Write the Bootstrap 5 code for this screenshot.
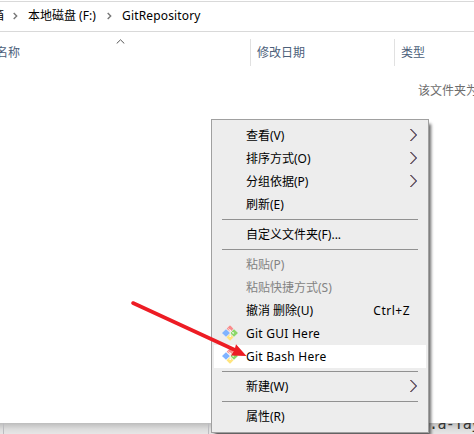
<!DOCTYPE html>
<html lang="zh-CN">
<head>
<meta charset="utf-8">
<title>GitRepository</title>
<link rel="stylesheet" href="https://cdn.jsdelivr.net/npm/bootstrap@5.3.0/dist/css/bootstrap.min.css">
<style>
html{overflow:hidden}
body{width:474px;height:434px;overflow:hidden;background:#fff;color:#000;font:12px/23px "Noto Sans","Noto Sans CJK SC",sans-serif}
.explorer{height:423px;overflow:hidden}
.address{height:32px;padding-top:1px}
.address-inner{height:31px;border-top:1px solid #d9d9d9;border-bottom:1px solid #d9d9d9;line-height:28px}
.crumb-cut{width:4px;margin-right:9px}
.crumb-cut span{margin-left:-8px}
.crumb-disk{width:79px;margin-left:10px}
.crumb-repo{margin-left:10px;letter-spacing:.16px}
.crumb-arrow{margin-top:10px}
.headers{height:34px;color:#4c607a;line-height:27px;padding-top:7px}
.headers>div{height:27px}
.h-name{width:250px}
.h-name span{margin-left:-4px}
.h-date{width:144px;border-left:1px solid #e1e1e1;padding-left:6px}
.h-type{width:80px;border-left:1px solid #e1e1e1;padding-left:6px}
.sorter{left:116px;top:39px}
.empty-note{padding:13px 0 0 418px;color:#6d6d6d}
.behind{height:11px;background:linear-gradient(#bdbdbd,#dcdcdc 55%,#e6e6e6)}
.behind i{width:1px;background:#bcbcc0}
.behind i:first-child{margin-left:3px}
.behind i:last-child{margin-left:204px}
.code-peek{left:430px;top:423px;width:44px;height:11px;font:15px/18px "DejaVu Sans Mono",monospace;color:#353535}
.code-peek span{margin:-8px 0 0 -1px;letter-spacing:-.6px;white-space:nowrap}
.ctx{left:211px;top:119px;width:218px;height:314px;padding:4px 2px;background:#ededed;border:1px solid #a0a0a0;box-shadow:3px 4px 3px -1px rgba(0,0,0,.6)}
.ctx-item{height:23px;padding-left:32px}
.ctx-item.off{color:#838383}
.ctx-item.hot{background:#fff}
.ctx-item .go{margin:4px 8px 0 auto}
.ctx-item .logo{margin:3px 8px 0 -24px}
.ctx-line{height:7px;padding:3px 8px 3px}
.ctx-line::before{content:"";display:block;height:1px;background:#919191}
.wide{letter-spacing:.25px}
.keys{letter-spacing:.5px}
.pointer{left:0;top:0}
</style>
<script src="https://cdn.jsdelivr.net/npm/bootstrap@5.3.0/dist/js/bootstrap.bundle.min.js"></script>
</head>
<body class="position-relative">
<svg width="0" height="0" class="position-absolute">
  <symbol id="go" viewBox="0 0 9 14"><path d="M1 1 6.6 7 1 13" fill="none" stroke="#dba25c" stroke-width="1"/><path d="M2.2 1 8 7 2.2 13" fill="none" stroke="#5a9be8" stroke-width="1"/><path d="M1.5 1 7.3 7 1.5 13" fill="none" stroke="#4a1830" stroke-width=".9"/></symbol>
  <symbol id="git" viewBox="0 0 16 16">
    <path d="M8 .6Q8.4.6 8.8 1L11.4 3.7 8.4 6.7 4.7 3.7 7.2 1Q7.6.6 8 .6Z" fill="#f98b8b"/>
    <path d="M4 4.3 7.5 7.6Q7.9 8 7.5 8.4L4 11.8.5 8.4Q.1 8 .5 7.6Z" fill="#80b3ff"/>
    <path d="M12 4.3 15.5 7.6Q15.9 8 15.5 8.4L12 11.8 8.6 8.4V7.6Z" fill="#8bd867"/>
    <path d="M8 8.9 11.5 12.3 8.4 15.4Q8 15.8 7.6 15.4L4.5 12.3Z" fill="#ffe47d"/>
    <path d="M6.2 3.4 8.3 5.4V11.2M8.3 5.4 10.8 7.8" fill="none" stroke="#f4f4f4" stroke-width=".8"/>
    <circle cx="8.2" cy="5.2" r=".7" fill="#fff"/><circle cx="8.2" cy="11.2" r=".8" fill="#fff"/><circle cx="11.2" cy="8" r=".8" fill="#fff"/>
  </symbol>
</svg>
<main class="explorer">
  <div class="address"><div class="address-inner d-flex">
    <div class="crumb-cut overflow-hidden"><span>箱</span></div>
    <svg class="crumb-arrow" width="5" height="8"><path d="M.7.9 3.7 4 .7 7.1" fill="none" stroke="#777" stroke-width="1.4"/></svg>
    <span class="crumb-disk">本地磁盘 (F:)</span>
    <svg class="crumb-arrow" width="5" height="8"><path d="M.7.9 3.7 4 .7 7.1" fill="none" stroke="#777" stroke-width="1.4"/></svg>
    <span class="crumb-repo">GitRepository</span>
  </div></div>
  <div class="headers d-flex">
    <div class="h-name"><span>名称</span></div>
    <div class="h-date">修改日期</div>
    <div class="h-type">类型</div>
  </div>
  <div class="empty-note text-nowrap">该文件夹为空。</div>
</main>
<svg class="sorter position-absolute" width="9" height="5"><path d="M.7 4.5 4.5.8 8.3 4.5" fill="none" stroke="#555"/></svg>
<footer class="behind d-flex"><i></i><i></i></footer>
<div class="code-peek position-absolute overflow-hidden"><span class="d-block">:a-Tay</span></div>
<nav class="ctx position-absolute">
  <div class="ctx-item d-flex">查看(V)<svg class="go" width="9" height="14"><use href="#go"/></svg></div>
  <div class="ctx-item d-flex">排序方式(O)<svg class="go" width="9" height="14"><use href="#go"/></svg></div>
  <div class="ctx-item d-flex">分组依据(P)<svg class="go" width="9" height="14"><use href="#go"/></svg></div>
  <div class="ctx-item">刷新(E)</div>
  <div class="ctx-line"></div>
  <div class="ctx-item">自定义文件夹(F)...</div>
  <div class="ctx-line"></div>
  <div class="ctx-item off">粘贴(P)</div>
  <div class="ctx-item off">粘贴快捷方式(S)</div>
  <div class="ctx-item d-flex justify-content-between pe-3"><span>撤消 删除(U)</span><span class="keys">Ctrl+Z</span></div>
  <div class="ctx-item d-flex"><svg class="logo" width="16" height="16"><use href="#git"/></svg><span class="wide">Git GUI Here</span></div>
  <div class="ctx-item hot d-flex"><svg class="logo" width="16" height="16"><use href="#git"/></svg><span class="wide">Git Bash Here</span></div>
  <div class="ctx-line"></div>
  <div class="ctx-item d-flex">新建(W)<svg class="go" width="9" height="14"><use href="#go"/></svg></div>
  <div class="ctx-line"></div>
  <div class="ctx-item">属性(R)</div>
</nav>
<svg class="pointer position-absolute" width="474" height="434"><path d="M133 303 236 350.5" stroke="#ed1c24" stroke-width="3.6" stroke-linecap="round"/><path d="M236 344.2 246.5 356 231 355.5 234.5 350Z" fill="#ed1c24"/></svg>
</body>
</html>
